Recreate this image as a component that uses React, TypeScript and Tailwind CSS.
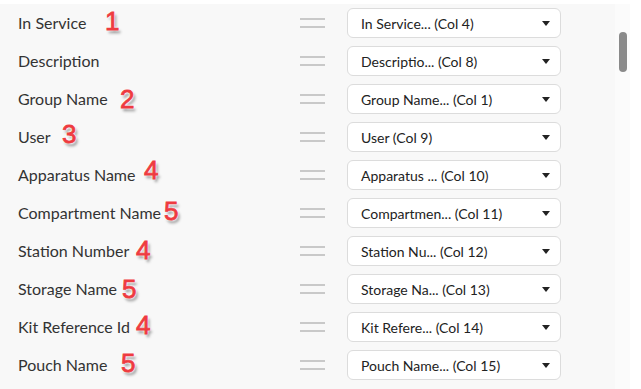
import React from 'react';

type Row = { label: string; value: string; mark?: string; markX?: number; markDy?: number };

const rows: Row[] = [
  { label: 'In Service', value: 'In Service... (Col 4)', mark: '1', markX: 105, markDy: -2 },
  { label: 'Description', value: 'Descriptio... (Col 8)' },
  { label: 'Group Name', value: 'Group Name... (Col 1)', mark: '2', markX: 120, markDy: 0 },
  { label: 'User', value: 'User (Col 9)', mark: '3', markX: 62, markDy: -3 },
  { label: 'Apparatus Name', value: 'Apparatus ... (Col 10)', mark: '4', markX: 144, markDy: -5 },
  { label: 'Compartment Name', value: 'Compartmen... (Col 11)', mark: '5', markX: 164, markDy: -2 },
  { label: 'Station Number', value: 'Station Nu... (Col 12)', mark: '4', markX: 136, markDy: -1 },
  { label: 'Storage Name', value: 'Storage Na... (Col 13)', mark: '5', markX: 122, markDy: 0 },
  { label: 'Kit Reference Id', value: 'Kit Refere... (Col 14)', mark: '4', markX: 136, markDy: -2 },
  { label: 'Pouch Name', value: 'Pouch Name... (Col 15)', mark: '5', markX: 121, markDy: -2 },
];

const DragHandle = () => (
  <div className="flex flex-col gap-[6px] w-[25px]">
    <div className="h-[2px] bg-[#c9c9c9]" />
    <div className="h-[2px] bg-[#c9c9c9]" />
  </div>
);

const App: React.FC = () => {
  return (
    <div className="w-[641px] h-[389px] bg-white overflow-hidden font-['Lato','Open_Sans',sans-serif]">
      <div className="flex h-full pt-[4px]">
        {/* List */}
        <div className="w-[615px] bg-[#f8f8f8] flex flex-col">
          {rows.map((r) => (
            <div key={r.label} className="h-[38px] flex items-center shrink-0">
              <div className="relative w-[300px] pl-[18px] text-[16px] text-[#333]">
                {r.label}
                {r.mark && (
                  <span
                    className="absolute top-1/2 -translate-y-1/2 font-['Liberation_Sans',Arial,sans-serif] text-[26px] leading-none font-normal text-[#ee3b40] [-webkit-text-stroke:0.8px_#ee3b40] [text-shadow:0_0_1px_#fff,0_0_2px_#fff,0_0_2px_#fff,0_0_3px_#fff,2px_3px_3px_rgba(0,0,0,0.45)]"
                    style={{ left: r.markX, marginTop: r.markDy }}
                  >
                    {r.mark}
                  </span>
                )}
              </div>
              <DragHandle />
              <div className="ml-[22px] w-[214px] h-[30px] bg-white border border-[#dcdcdc] rounded-[6px] flex items-center justify-between pl-[13px] pr-[10px]">
                <span className="text-[14px] text-[#222]">{r.value}</span>
                <span className="w-0 h-0 border-l-[4px] border-r-[4px] border-t-[5px] border-l-transparent border-r-transparent border-t-[#222]" />
              </div>
            </div>
          ))}
        </div>
        {/* Scrollbar */}
        <div className="w-[15px] bg-[#fbfbfb] flex justify-center pt-[28px]">
          <div className="w-[8px] h-[40px] rounded-full bg-[#8a8a8a]" />
        </div>
        <div className="flex-1 bg-white" />
      </div>
    </div>
  );
};

export default App;
